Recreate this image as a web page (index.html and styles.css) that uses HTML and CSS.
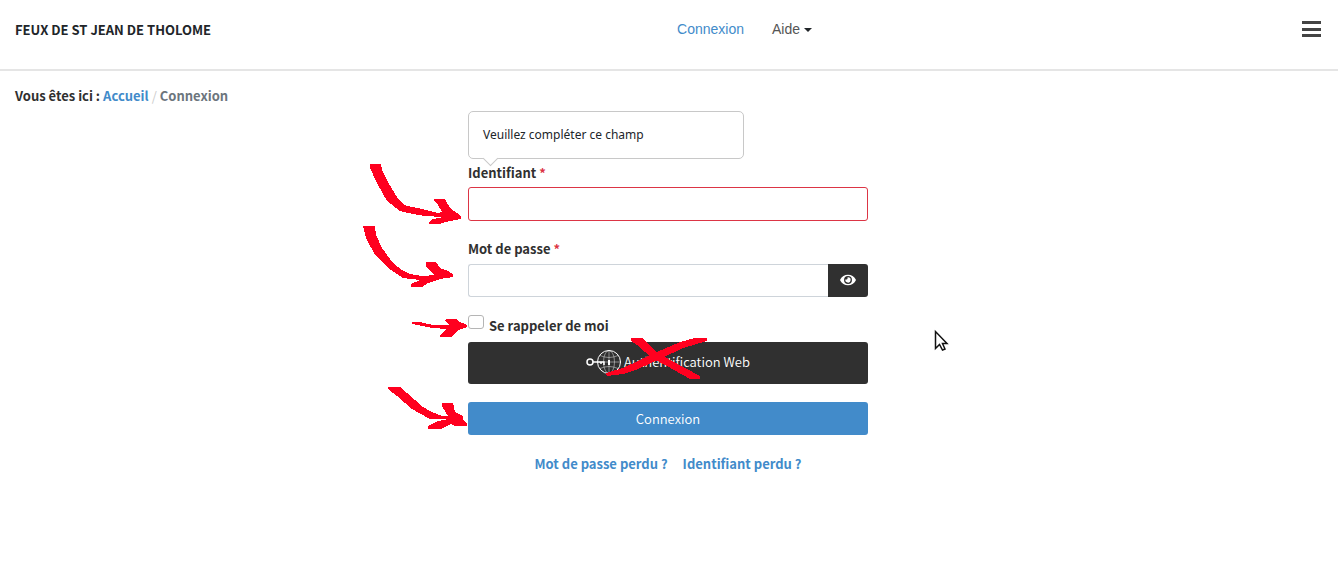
FILE: index.html
```html
<!DOCTYPE html>
<html lang="fr">
<head>
<meta charset="utf-8">
<meta name="viewport" content="width=device-width, initial-scale=1">
<title>Connexion - Feux de St Jean de Tholome</title>
<link rel="stylesheet" href="styles.css">
</head>
<body>
<header class="site-header">
  <div class="brand">FEUX DE ST JEAN DE THOLOME</div>
  <nav class="main-nav">
    <a class="nav-link active" href="#">Connexion</a>
    <a class="nav-link dropdown" href="#">Aide<span class="caret"></span></a>
  </nav>
  <button class="menu-toggle" type="button" aria-label="Menu">
    <svg width="20" height="18" viewBox="0 0 20 18" aria-hidden="true"><path d="M0 1.500h19M0 8.500h19M0 14.500h19" /></svg>
  </button>
</header>
<nav class="breadcrumb" aria-label="Fil d'Ariane">
  <span>Vous êtes ici :</span>
  <a href="#">Accueil</a>
  <span class="separator">/</span>
  <span class="current">Connexion</span>
</nav>
<main class="content">
  <form class="login" novalidate>
    <div class="hint" role="alert">Veuillez compléter ce champ</div>
    <label class="field-label" for="username">Identifiant <span class="required">*</span></label>
    <input class="field invalid" id="username" type="text">
    <label class="field-label second" for="password">Mot de passe <span class="required">*</span></label>
    <div class="input-group">
      <input class="field" id="password" type="password">
      <button class="reveal" type="button" aria-label="Afficher le mot de passe">
        <svg width="16" height="14" viewBox="0 0 576 512" aria-hidden="true"><path fill="currentColor" d="M572.500 241.400C518.300 135.600 410.900 64 288 64S57.700 135.600 3.500 241.400a32.400 32.400 0 0 0 0 29.200C57.700 376.400 165.100 448 288 448s230.300-71.600 284.500-177.400a32.400 32.400 0 0 0 0-29.200zM288 400a144 144 0 1 1 144-144 143.900 143.900 0 0 1-144 144zm0-240a95.300 95.300 0 0 0-25.300 3.800 47.900 47.900 0 0 1-66.900 66.900A95.800 95.800 0 1 0 288 160z"/></svg>
      </button>
    </div>
    <div class="remember">
      <input id="remember" type="checkbox">
      <label for="remember">Se rappeler de moi</label>
    </div>
    <button class="button dark" type="button">
      <svg class="key-icon" width="36" height="28" viewBox="0 0 36 28" fill="none" stroke="#fff" aria-hidden="true">
        <circle cx="23" cy="14" r="11.500" stroke-width="1"/>
        <g stroke-width=".6" opacity=".75"><ellipse cx="23" cy="14" rx="5.500" ry="11.500"/><path d="M23 2.500v23M12 14h22.500M14 7.500q9 4 18 0M14 20.500q9-4 18 0"/></g>
        <path d="M7 14h11v3M15 14v2" stroke-width="1.500"/>
        <circle cx="4" cy="14" r="3" stroke-width="1.500"/>
        <path d="M23 12v5" stroke-width="2"/>
      </svg>Authentification Web
    </button>
    <button class="button primary" type="submit">Connexion</button>
    <div class="help-links"><a href="#">Mot de passe perdu ?</a><a href="#">Identifiant perdu ?</a></div>
    <svg class="annotations" width="600" height="340" viewBox="360 111 600 340" aria-hidden="true">
      <g fill="#ff001f" shape-rendering="crispEdges">
        <path d="M370 164H381L382 170 388 182 397 197Q402 205 408 206L422 209 438 213 442 212 438 205 434 201V199H445L450 208 461 216V219L450 221 439 224H429V222L433 219 443 217 425 216 408 213 400 211 387 201 377 183 370 168Z"/>
        <path d="M363 226H375L376 235 382 248 393 263 402 270 410 274 422 276 435 275 426 267V262H436L440 268 448 271 453 274V277L440 279 428 283 422 287H411V284L420 280 403 278 388 268 375 255 366 238Z"/>
        <path d="M412 322H420L433 325 450 325 445 321 446 319H457L458 321 467 325V327L458 330 451 337H440V335L447 329 433 328 412 324Z"/>
        <path d="M388 387H400L407 393 423 407 432 412 442 416H448L442 406V403H453L455 412 463 416V420L467 423V426H455L451 424 441 429H428V426L438 421 449 419H430L412 409 397 396 388 389Z"/>
        <path d="M631 338H642L657 352 670 360 700 376V379H690L667 366 652 358 637 345 631 341Z"/>
        <path d="M707 338V341L683 348 660 359 638 369 623 374 607 376 606 373 623 368 657 352 680 342 695 338Z"/>
      </g>
      <path class="pointer" d="M935.500 331.500V348.500L939.500 344.500 942.500 350 945 349 942.500 343.500H947Z"/>
    </svg>
  </form>
</main>
</body>
</html>
```
FILE: styles.css
```css
* { box-sizing: border-box; }
body {
  margin: 0;
  background: #fff;
  color: #303030;
  font: 13px/20px "Noto Sans CJK SC", "Noto Sans", sans-serif;
}
a { color: #428bca; text-decoration: none; }
button, input { font: inherit; }
button { border: 0; padding: 0; cursor: pointer; }
.site-header {
  display: grid;
  grid-template-columns: 1fr auto 1fr;
  align-items: center;
  padding: 20px 16px 29px 15px;
  border-bottom: 2px solid #e5e5e5;
}
.brand { font-weight: 700; color: #212529; }
.main-nav {
  display: flex;
  align-self: start;
  gap: 28px;
  padding-left: 152px;
  font-family: "Liberation Sans", sans-serif;
  font-size: 14px;
  line-height: 18px;
}
.nav-link { color: #555; }
.nav-link.active { color: #428bca; }
.caret {
  display: inline-block;
  margin-left: 4px;
  vertical-align: 2px;
  border: 4px solid transparent;
  border-top-color: #212529;
  border-bottom: 0;
}
.menu-toggle { display: flex; justify-self: end; background: none; }
.menu-toggle path { stroke: #444; stroke-width: 3; }
.breadcrumb {
  display: flex;
  gap: 3px;
  padding: 15px 15px 5px;
  font-weight: 700;
}
.separator { color: #ccc; font-weight: 400; }
.current { color: #6c757d; }
.content { padding: 0 16px 0 14px; }
.login {
  position: relative;
  display: flex;
  flex-direction: column;
  max-width: 400px;
  margin: 0 auto;
}
.hint {
  position: relative;
  width: 276px;
  padding: 13px 14px;
  border: 1px solid #c8c8c8;
  border-radius: 5px;
  color: #212529;
  font-family: "Noto Sans", sans-serif;
  font-size: 12px;
}
.hint::after {
  content: "";
  position: absolute;
  left: 16px;
  bottom: -6px;
  width: 10px;
  height: 10px;
  border: solid #c8c8c8;
  border-width: 0 1px 1px 0;
  background: #fff;
  transform: rotate(45deg);
}
.field-label { margin: 4px 0; font-weight: 700; }
.field-label.second { margin-top: 18px; }
.required { color: #dc3545; }
.field {
  width: 100%;
  height: 34px;
  padding: 4px 10px;
  border: 1px solid #ced4da;
  border-radius: 3px;
  background: #fff;
}
.field.invalid { border-color: #dc3545; }
.input-group { display: flex; height: 33px; margin-top: 1px; }
.input-group .field { flex: 1; height: auto; border-right: 0; border-radius: 3px 0 0 3px; }
.reveal {
  display: grid;
  place-items: center;
  width: 40px;
  padding-bottom: 2px;
  border-radius: 0 3px 3px 0;
  background: #303030;
  color: #fff;
}
.remember { display: flex; gap: 5px; margin-top: 18px; font-weight: 700; }
.remember input {
  appearance: none;
  width: 16px;
  height: 14px;
  margin: 0;
  border: 1px solid #b5b5b5;
  border-radius: 3px;
}
.remember label { margin-top: 1px; }
.button {
  display: flex;
  align-items: center;
  justify-content: center;
  border-radius: 3px;
  color: #fff;
  font-weight: 350;
}
.dark { height: 42px; margin-top: 6px; padding-bottom: 2px; background: #303030; }
.key-icon { margin-right: 2px; }
.primary { height: 33px; margin-top: 18px; background: #428bca; }
.help-links {
  display: flex;
  justify-content: center;
  gap: 15px;
  margin-top: 19px;
  font-weight: 700;
}
.annotations {
  position: absolute;
  top: 0;
  left: -108px;
  pointer-events: none;
}
.pointer { fill: #fff; stroke: #111; stroke-width: 1.5; }
```
